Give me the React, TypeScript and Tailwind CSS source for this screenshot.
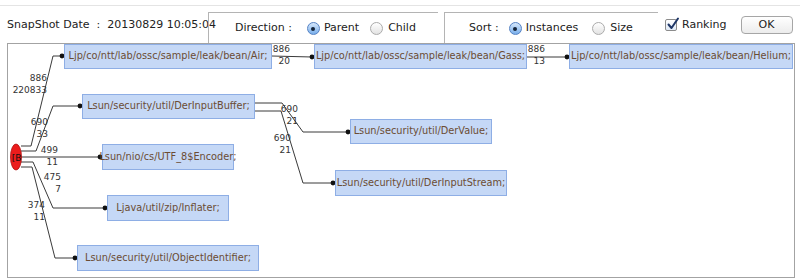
import React from 'react';

// Node boxes of the reference graph (offsets are relative to the panel's inner box)
const NODES = [
    { label: 'Ljp/co/ntt/lab/ossc/sample/leak/bean/Air;', pos: 'left-[56px] top-[0px] w-[208px] h-[25px]' },
    { label: 'Ljp/co/ntt/lab/ossc/sample/leak/bean/Gass;', pos: 'left-[306px] top-[0px] w-[213px] h-[25px]' },
    { label: 'Ljp/co/ntt/lab/ossc/sample/leak/bean/Helium;', pos: 'left-[561px] top-[0px] w-[224px] h-[25px]' },
    { label: 'Lsun/security/util/DerInputBuffer;', pos: 'left-[74px] top-[50px] w-[173px] h-[25px]' },
    { label: 'Lsun/security/util/DerValue;', pos: 'left-[342px] top-[75px] w-[142px] h-[25px]' },
    { label: 'Lsun/nio/cs/UTF_8$Encoder;', pos: 'left-[94px] top-[100px] w-[132px] h-[26px]' },
    { label: 'Lsun/security/util/DerInputStream;', pos: 'left-[327px] top-[126px] w-[172px] h-[26px]' },
    { label: 'Ljava/util/zip/Inflater;', pos: 'left-[99px] top-[151px] w-[122px] h-[26px]' },
    { label: 'Lsun/security/util/ObjectIdentifier;', pos: 'left-[69px] top-[201px] w-[182px] h-[26px]' },
];

// Edges in page coordinates: polyline points, end dot, label pair (right aligned)
const EDGES = [
    { pts: '21,146 31,146 53,56 62,56', end: [62, 56], a: '886', b: '220833', lx: 47, ly: 81 },
    { pts: '21,151 36,151 53,106 80,106', end: [80, 106], a: '690', b: '33', lx: 48, ly: 125 },
    { pts: '21,157 100,157', end: [100, 157], a: '499', b: '11', lx: 58, ly: 153 },
    { pts: '21,162 33,162 53,208 105,208', end: [105, 208], a: '475', b: '7', lx: 61, ly: 180 },
    { pts: '21,167 32,167 55,258 75,258', end: [75, 258], a: '374', b: '11', lx: 45, ly: 208 },
    { pts: '272,56 312,57', end: [312, 57], a: '886', b: '20', lx: 290, ly: 52 },
    { pts: '527,57 567,57', end: [567, 57], a: '886', b: '13', lx: 545, ly: 52 },
    { pts: '255,103 282,103 303,132 348,132', end: [348, 132], a: '690', b: '21', lx: 298, ly: 112 },
    { pts: '255,111 281,111 303,183 333,183', end: [333, 183], a: '690', b: '21', lx: 291, ly: 141 },
];

function Radio({ checked }: { checked: boolean }) {
    return checked ? (
        <span className="flex h-[13px] w-[13px] items-center justify-center rounded-full border border-[#5582c4] bg-linear-to-b from-[#d6e8fc] to-[#78aeea]">
            <span className="h-[4px] w-[4px] rounded-full bg-[#14243a]" />
        </span>
    ) : (
        <span className="block h-[13px] w-[13px] rounded-full border border-[#ababab] bg-linear-to-b from-white to-[#e3e3e3]" />
    );
}

export default function App() {
    return (
        <div className="w-[800px] h-[278px] overflow-hidden bg-white pt-[5px] text-[#222] font-['DejaVu_Sans',sans-serif]">
            {/* Toolbar */}
            <div className="flex h-[38px] border-t border-[#e4e4e4] text-[11px]">
                <div className="flex w-[208px] items-center pl-[7px] pt-[1px] whitespace-pre">
                    SnapShot Date  :  20130829 10:05:04
                </div>
                <div className="mt-[6px] flex w-[230px] items-center border-l border-t border-[#b4b4b4] pl-[26px] pt-[1px]">
                    <span className="whitespace-pre">Direction :</span>
                    <span className="ml-[15px]"><Radio checked /></span>
                    <span className="ml-[4px]">Parent</span>
                    <span className="ml-[11px]"><Radio checked={false} /></span>
                    <span className="ml-[5px]">Child</span>
                </div>
                <div className="ml-[6px] mt-[6px] flex w-[214px] items-center border-l border-t border-[#b4b4b4] pl-[24px] pt-[1px]">
                    <span className="whitespace-pre">Sort :</span>
                    <span className="ml-[10px]"><Radio checked /></span>
                    <span className="ml-[4px]">Instances</span>
                    <span className="ml-[14px]"><Radio checked={false} /></span>
                    <span className="ml-[5px]">Size</span>
                </div>
                <div className="ml-[7px] flex items-center pt-[1px]">
                    <span className="relative h-[12px] w-[12px] rounded-[2px] border border-[#8c8c8c] bg-linear-to-b from-white to-[#dfe9f6]">
                        <svg className="absolute -top-[3px] left-[0px]" width="14" height="14" viewBox="0 0 14 14">
                            <path d="M2.5 7.5 L5.5 11 L12 1.5" fill="none" stroke="#1d3566" strokeWidth="2" strokeLinecap="round" strokeLinejoin="round" />
                        </svg>
                    </span>
                    <span className="ml-[5px]">Ranking</span>
                </div>
                <div className="ml-[14px] flex items-center pt-[1px]">
                    <button
                        type="button"
                        className="flex h-[18px] w-[52px] items-center justify-center rounded-[4px] border border-[#a6a6a6] bg-linear-to-b from-white to-[#ececec] text-[11px] text-[#222]"
                    >
                        OK
                    </button>
                </div>
            </div>

            {/* Graph panel */}
            <div className="relative ml-[7px] h-[235px] w-[788px] border border-[#a3a3a3] bg-white">
                <svg className="absolute left-0 top-0" width="786" height="233" viewBox="8 44 786 233">
                    {EDGES.map((e, i) => (
                        <g key={i}>
                            <polyline points={e.pts} fill="none" stroke="#3a3a3a" strokeWidth="1" />
                            <circle cx={e.end[0]} cy={e.end[1]} r="2.4" fill="#111" />
                            <text x={e.lx} y={e.ly} textAnchor="end" fontSize="9" fill="#333" fontFamily="DejaVu Sans, sans-serif">{e.a}</text>
                            <text x={e.lx} y={e.ly + 12} textAnchor="end" fontSize="9" fill="#333" fontFamily="DejaVu Sans, sans-serif">{e.b}</text>
                        </g>
                    ))}
                    <ellipse cx="16" cy="157" rx="5.5" ry="13" fill="#ec1c1c" stroke="#b01010" strokeWidth="0.8" />
                    <text x="16.5" y="160.5" textAnchor="middle" fontSize="9" fill="#111" fontFamily="DejaVu Sans, sans-serif">[B</text>
                </svg>

                {NODES.map((n) => (
                    <div
                        key={n.label}
                        className={`absolute flex items-center justify-center whitespace-nowrap border border-[#8eaee5] bg-[#c5d8f6] text-[9.75px] text-[#6b4c33] ${n.pos}`}
                    >
                        {n.label}
                    </div>
                ))}
            </div>
        </div>
    );
}
